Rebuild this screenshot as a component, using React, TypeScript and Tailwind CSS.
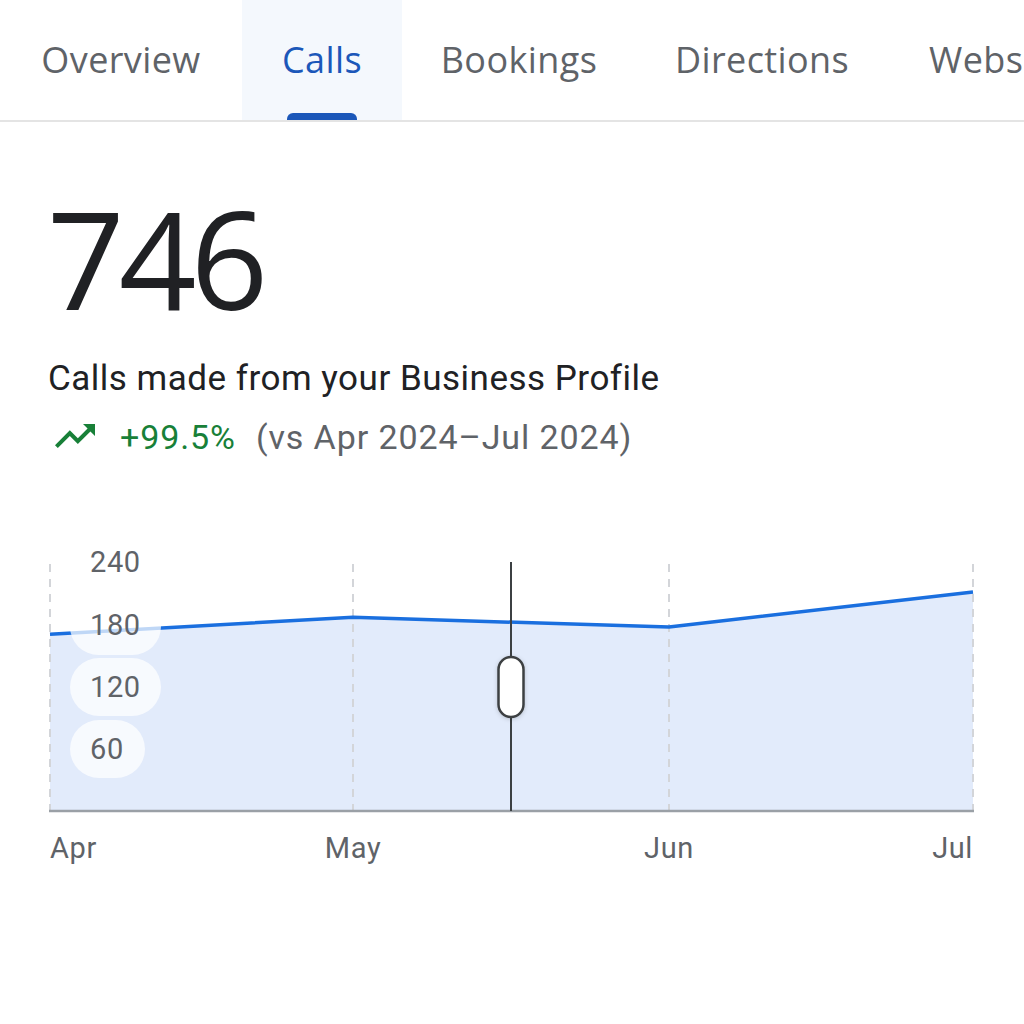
import { useState } from 'react';

const TABS = [
  { label: 'Overview', w: 'w-[242px]' },
  { label: 'Calls', w: 'w-[160px]' },
  { label: 'Bookings', w: 'w-[234px]' },
  { label: 'Directions', w: 'w-[252px]' },
  { label: 'Website', w: 'w-[200px]' },
];

// chart geometry (svg coords, svg top sits at page y=540)
const BASE_Y = 271;
const PX_PER_UNIT = 62 / 60;
const POINTS = [
  { x: 50, v: 171, label: 'Apr' },
  { x: 353, v: 187.5, label: 'May' },
  { x: 669, v: 178, label: 'Jun' },
  { x: 973, v: 212, label: 'Jul' },
];

function yOf(v: number) {
  return BASE_Y - v * PX_PER_UNIT;
}

function TrendUp() {
  return (
    <svg width="48" height="48" viewBox="0 0 24 24" fill="#188038">
      <path d="M16 6l2.29 2.29-4.88 4.88-4-4L2 16.59 3.41 18l6-6 4 4 6.3-6.29L22 12V6z" />
    </svg>
  );
}

function CallsChart() {
  const line = POINTS.map((p) => `${p.x},${yOf(p.v)}`).join(' ');
  const area = `50,${BASE_Y} ${line} 973,${BASE_Y}`;
  const labelFont = { fontFamily: 'Roboto, "Liberation Sans", sans-serif', letterSpacing: '0.6px' };

  return (
    <svg width="1024" height="340" viewBox="0 0 1024 340" className="block">
      <defs>
        <filter id="handleShadow" x="-50%" y="-30%" width="200%" height="160%">
          <feDropShadow dx="0" dy="1" stdDeviation="2" floodColor="#000" floodOpacity="0.18" />
        </filter>
      </defs>
      <polygon points={area} fill="#e2ebfb" />
      {POINTS.map((p) => (
        <line
          key={p.label}
          x1={p.x}
          x2={p.x}
          y1={24}
          y2={BASE_Y}
          stroke="#d3d5d9"
          strokeWidth="2"
          strokeDasharray="8 7"
        />
      ))}
      <polyline points={line} fill="none" stroke="#1a6fdf" strokeWidth="3.5" strokeLinejoin="round" />
      <line x1="49" x2="974" y1={BASE_Y} y2={BASE_Y} stroke="#9aa0a6" strokeWidth="2.5" />

      {/* y-axis labels, on translucent pills */}
      <rect x="70" y="58" width="91" height="57" rx="28.5" fill="#ffffff" fillOpacity="0.72" />
      <rect x="70" y="118" width="91" height="58" rx="29" fill="#ffffff" fillOpacity="0.72" />
      <rect x="70" y="180" width="75" height="58" rx="29" fill="#ffffff" fillOpacity="0.72" />
      <g fill="#5f6368" fontSize="29" style={labelFont}>
        <text x="90" y="32">240</text>
        <text x="90" y="95">180</text>
        <text x="90" y="157">120</text>
        <text x="90" y="219">60</text>
      </g>

      {/* scrub cursor */}
      <line x1="511" x2="511" y1="22" y2={BASE_Y} stroke="#3c4043" strokeWidth="2" />
      <rect
        x="498.5"
        y="117"
        width="25"
        height="60"
        rx="12.5"
        fill="#ffffff"
        stroke="#3c4043"
        strokeWidth="2.5"
        filter="url(#handleShadow)"
      />

      <g fill="#5f6368" fontSize="29" style={labelFont}>
        <text x="50" y="318">Apr</text>
        <text x="353" y="318" textAnchor="middle">May</text>
        <text x="669" y="318" textAnchor="middle">Jun</text>
        <text x="973" y="318" textAnchor="end">Jul</text>
      </g>
    </svg>
  );
}

export default function App() {
  const [active, setActive] = useState('Calls');

  return (
    <div className="w-[1024px] h-[1024px] overflow-hidden bg-white">
      {/* Tabs */}
      <div className="flex h-[122px] border-b-2 border-[#e4e4e4] whitespace-nowrap overflow-hidden">
        {TABS.map((t) => {
          const isActive = t.label === active;
          return (
            <button
              key={t.label}
              onClick={() => setActive(t.label)}
              className={`relative flex shrink-0 items-center justify-center text-[36px] tracking-[0.4px] ${t.w} ${
                isActive ? 'bg-[#f4f8fd] text-[#1b57b9]' : 'text-[#5f6368]'
              }`}
              style={{ fontFamily: '"Open Sans", Inter, sans-serif' }}
            >
              <span className={t.label === 'Website' ? 'pl-[41px] w-full text-left' : ''}>{t.label}</span>
              {isActive && (
                <span className="absolute bottom-0 left-1/2 h-[7px] w-[70px] -translate-x-1/2 rounded-t-[6px] bg-[#1b57b9]" />
              )}
            </button>
          );
        })}
      </div>

      <div className="pl-[47px]">
        <div
          className="mt-[68px] text-[136px] leading-none tracking-[-6px] text-[#202124]"
          style={{ fontFamily: '"Open Sans", Inter, sans-serif' }}
        >
          746
        </div>
        <div
          className="mt-[35px] pl-[1px] text-[35px] leading-none tracking-[0.5px] text-[#202124]"
          style={{ fontFamily: 'Roboto, "Liberation Sans", sans-serif' }}
        >
          Calls made from your Business Profile
        </div>
        <div
          className="mt-[16px] flex items-start text-[34px] leading-none tracking-[0.9px]"
          style={{ fontFamily: 'Roboto, "Liberation Sans", sans-serif' }}
        >
          <span className="ml-[4px]">
            <TrendUp />
          </span>
          <span className="ml-[21px] mt-[8px] text-[#188038]">+99.5%</span>
          <span className="ml-[20px] mt-[8px] text-[#5f6368]">(vs Apr 2024–Jul 2024)</span>
        </div>
      </div>

      <div className="mt-[80px]">
        <CallsChart />
      </div>
    </div>
  );
}
